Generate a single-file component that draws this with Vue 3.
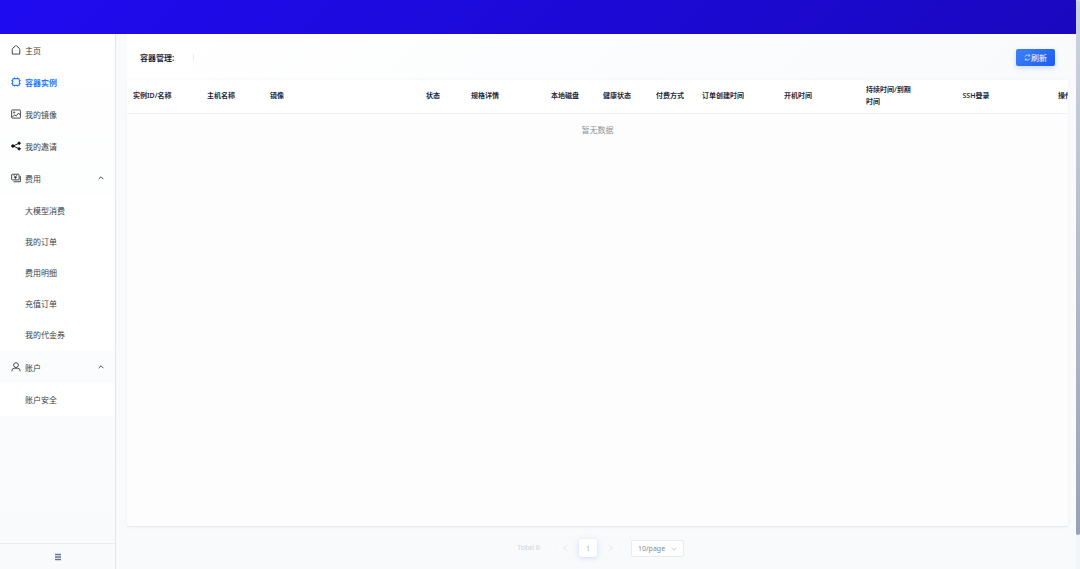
<script setup>
import { ref } from 'vue'

const mainItems = [
  { label: '主页', icon: 'home' },
  { label: '容器实例', icon: 'chip', active: true },
  { label: '我的镜像', icon: 'image' },
  { label: '我的邀请', icon: 'share' },
]
const groups = [
  { label: '费用', icon: 'money', children: ['大模型消费', '我的订单', '费用明细', '充值订单', '我的代金券'] },
  { label: '账户', icon: 'user', children: ['账户安全'] },
]
const columns = [
  { label: '实例ID/名称', width: 74 },
  { label: '主机名称', width: 63 },
  { label: '镜像', width: 156 },
  { label: '状态', width: 45 },
  { label: '规格详情', width: 80 },
  { label: '本地磁盘', width: 52 },
  { label: '健康状态', width: 53 },
  { label: '付费方式', width: 46 },
  { label: '订单创建时间', width: 82 },
  { label: '开机时间', width: 82 },
  { label: '持续时间/到期时间', width: 61 },
  { label: 'SSH登录', width: 110, center: true },
  { label: '操作', width: 68, center: true },
]
const pageSize = ref('10')
</script>

<template>
  <div class="page">
    <div class="content">
      <header class="topbar"></header>
      <div class="body">
        <aside class="sidebar">
          <nav class="menu">
            <a v-for="item in mainItems" :key="item.label" href="#" class="item" :class="{ active: item.active }">
              <svg v-if="item.icon === 'home'" class="icon" viewBox="0 0 16 16"><path d="M2 14.500V7q0-1 1-2l4-3.500q1-.8 2 0L13 5q1 1 1 2v7.500z" /></svg>
              <svg v-else-if="item.icon === 'chip'" class="icon" viewBox="0 0 16 16"><rect x="2.500" y="2.500" width="11" height="11" rx="2.500" stroke-width="2" /><path d="M5.500 .5v2M10.500 .5v2M5.500 13.500v2M10.500 13.500v2M.5 5.500h2M.5 10.500h2M13.500 5.500h2M13.500 10.500h2" /></svg>
              <svg v-else-if="item.icon === 'image'" class="icon" viewBox="0 0 16 16"><rect x="1" y="1.500" width="14" height="13" rx="1" /><circle cx="5" cy="5.500" r="1" /><path d="m2 12.500 4-3 2.500 1.500 3.500-4.500 2.500 3" /></svg>
              <svg v-else class="icon solid" viewBox="0 0 16 16"><path d="M13 3.500 3.500 8l9.500 4.500" /><circle cx="13" cy="3.500" r="1.800" /><circle cx="3" cy="8" r="2" /><circle cx="13" cy="12.500" r="1.800" /></svg>
              <span>{{ item.label }}</span>
            </a>
            <div v-for="group in groups" :key="group.label">
              <button type="button" class="item group">
                <svg v-if="group.icon === 'money'" class="icon" viewBox="0 0 16 16"><rect x="1" y="2" width="12" height="9" rx="1" /><path d="M4 14h11V5M4.500 3.500l2.500 3 2.500-3M7 6.500V10M4.500 7h5" /></svg>
                <svg v-else class="icon" viewBox="0 0 16 16"><circle cx="8" cy="5" r="3.800" /><path d="M1.500 15v-1q0-4 4-4h5q4 0 4 4v1" /></svg>
                <span>{{ group.label }}</span>
                <svg class="arrow" viewBox="0 0 10 10"><path d="m1 7 4-4 4 4" /></svg>
              </button>
              <div class="submenu">
                <a v-for="child in group.children" :key="child" href="#" class="item child">{{ child }}</a>
              </div>
            </div>
          </nav>
          <button type="button" class="collapse" aria-label="收起菜单">
            <svg viewBox="0 0 8 8"><path d="M1 1.500h6M1 4h6M1 6.500h6" /></svg>
          </button>
        </aside>

        <main class="main">
          <section class="toolbar">
            <h1>容器管理:</h1>
            <span class="divider"></span>
            <button type="button" class="refresh">
              <svg viewBox="0 0 16 16"><path d="M13.500 10A6 6 0 0 1 3 11.500M2.500 6A6 6 0 0 1 13 4.500M3 15v-3.500h3.500M13 1v3.500H9.500" /></svg>
              <span>刷新</span>
            </button>
          </section>
          <section class="table-area">
            <table>
              <colgroup>
                <col v-for="col in columns" :key="col.label" :style="{ width: col.width + 'px' }" />
              </colgroup>
              <thead>
                <tr>
                  <th v-for="col in columns" :key="col.label" :class="{ center: col.center }">{{ col.label }}</th>
                </tr>
              </thead>
            </table>
            <p class="empty">暂无数据</p>
          </section>
          <footer class="pagination">
            <span class="total">Total 0</span>
            <button type="button" class="step" aria-label="上一页" disabled><svg viewBox="0 0 10 10"><path d="M7 1 3 5l4 4" /></svg></button>
            <button type="button" class="number">1</button>
            <button type="button" class="step" aria-label="下一页" disabled><svg viewBox="0 0 10 10"><path d="m3 1 4 4-4 4" /></svg></button>
            <span class="size">
              <select v-model="pageSize" aria-label="每页条数">
                <option value="10">10/page</option>
                <option value="20">20/page</option>
              </select>
              <svg viewBox="0 0 10 10"><path d="m1 3 4 4 4-4" /></svg>
            </span>
          </footer>
        </main>
      </div>
    </div>
    <div class="scrollbar"><div class="thumb"></div></div>
  </div>
</template>

<style>
body {
  overflow: hidden;
}
</style>

<style scoped>
.page {
  display: flex;
  height: 100vh;
  font-family: "Noto Sans", "Noto Sans CJK SC", sans-serif;
  font-size: 8px;
  color: #303133;
  background: #f8fafc;
}
.page * {
  box-sizing: border-box;
}
button,
select {
  margin: 0;
  padding: 0;
  border: 0;
  background: none;
  font: inherit;
  color: inherit;
}
svg {
  fill: none;
  stroke: currentColor;
  stroke-width: 1.5;
  flex: none;
}
.content {
  flex: 1;
  min-width: 0;
  display: flex;
  flex-direction: column;
}
.topbar {
  height: 34px;
  flex: none;
  background: linear-gradient(135deg, #1f0bf0, #1a08c0);
}
.body {
  flex: 1;
  min-height: 0;
  display: flex;
}
.sidebar {
  width: 116px;
  flex: none;
  display: flex;
  flex-direction: column;
  border-right: 1px solid #e2e6ed;
  background: linear-gradient(180deg, #ffffff, #f8fafc);
}
.menu {
  flex: 1;
}
.item {
  display: flex;
  align-items: center;
  gap: 4px;
  width: 100%;
  height: 32px;
  padding: 0 11px;
  color: #3c3e42;
  text-decoration: none;
  text-align: left;
}
.item.active {
  color: #2878ff;
  font-weight: 700;
}
.icon {
  width: 10px;
  height: 10px;
}
.solid {
  color: #111111;
}
.solid circle {
  fill: currentColor;
}
.arrow {
  width: 6px;
  height: 6px;
  margin-left: auto;
}
.submenu {
  padding: 1px 0;
  background: #ffffff;
}
.child {
  height: 31px;
  padding-left: 25px;
}
.collapse {
  display: flex;
  align-items: center;
  justify-content: center;
  height: 26px;
  border-top: 1px solid #e9edf2;
  color: #64748b;
}
.collapse svg {
  width: 8px;
  height: 8px;
}
.main {
  flex: 1;
  min-width: 0;
  display: flex;
  flex-direction: column;
  padding: 0 8px 0 11px;
}
.toolbar {
  display: flex;
  align-items: center;
  height: 46px;
  flex: none;
  padding: 0 13px;
  background: linear-gradient(135deg, #ffffff, #f8fafc);
}
h1 {
  margin: 0;
  font-size: 8px;
  font-weight: 600;
  color: #1e293b;
}
.divider {
  width: 1px;
  height: 7px;
  margin-left: 19px;
  background: #e8ebf0;
}
.refresh {
  display: flex;
  align-items: center;
  justify-content: center;
  width: 39px;
  height: 17px;
  margin-left: auto;
  border-radius: 2px;
  background: linear-gradient(135deg, #3b82f6, #1d5df0);
  box-shadow: 0 2px 5px #3b82f640;
  color: #ffffff;
}
.refresh svg {
  width: 7px;
  height: 7px;
}
.table-area {
  flex: 1;
  min-height: 0;
  overflow: hidden;
  border-bottom: 1px solid #e6eaf0;
  background: #fdfdfe;
  box-shadow: 0 0 4px #0f172a0a;
}
table {
  width: 972px;
  table-layout: fixed;
  border-collapse: collapse;
  background: #ffffff;
}
th {
  height: 33px;
  padding: 0 6px;
  border-bottom: 1px solid #eef1f5;
  font-size: 7px;
  line-height: 12px;
  font-weight: 600;
  text-align: left;
  color: #1e293b;
}
.center {
  text-align: center;
}
.empty {
  margin: 0;
  line-height: 32px;
  text-align: center;
  color: #909399;
}
.pagination {
  display: flex;
  align-items: center;
  justify-content: center;
  height: 42px;
  flex: none;
  color: #cfd3da;
}
.total {
  width: 35px;
  margin-right: 10px;
  border-radius: 3px;
  line-height: 18px;
  text-align: center;
  font-size: 7px;
  font-weight: 600;
  color: #d8dce2;
  box-shadow: 0 0 2px #0f172a0a;
}
.step,
.number {
  display: flex;
  align-items: center;
  justify-content: center;
  width: 18px;
  height: 18px;
  border-radius: 3px;
}
.step {
  box-shadow: 0 0 2px #0f172a0a;
}
.step svg,
.size svg {
  width: 6px;
  height: 6px;
  stroke-width: 1;
}
.number {
  margin: 0 5px;
  background: #ffffff;
  box-shadow: 0 1px 5px #3b82f640;
  font-size: 7px;
  color: #a8adb5;
}
.size {
  position: relative;
  margin-left: 11px;
}
.size select {
  display: block;
  appearance: none;
  width: 53px;
  height: 17px;
  padding: 0 6px;
  border: 1px solid #e8ebf0;
  border-radius: 2px;
  background: #ffffff;
  font-size: 7px;
  color: #85898f;
}
.size svg {
  position: absolute;
  right: 7px;
  top: 6px;
  pointer-events: none;
  color: #a8abb2;
}
.scrollbar {
  width: 4px;
  flex: none;
  background: #f1f5f9;
}
.thumb {
  height: 94%;
  border-radius: 2px;
  background: linear-gradient(180deg, #cbd5e1, #94a3b8);
}
</style>
